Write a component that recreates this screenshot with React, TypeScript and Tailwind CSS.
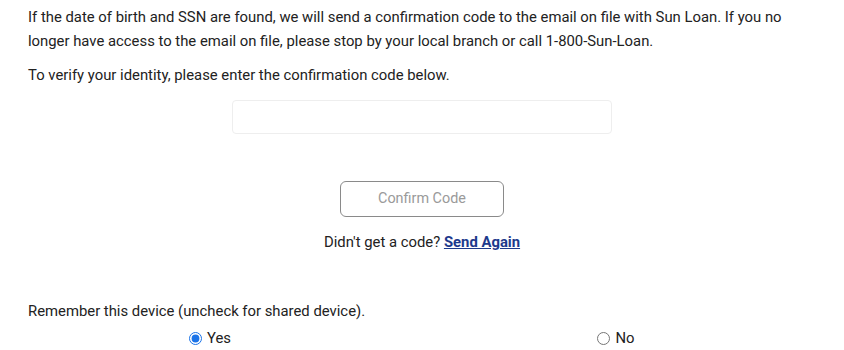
import { useState } from 'react'

export default function App() {
  const [code, setCode] = useState('')
  const [remember, setRemember] = useState(true)

  return (
    <div className="w-[844px] h-[350px] overflow-hidden bg-white text-[#222] font-['Roboto',sans-serif] text-[14.85px] leading-[24px]">
      <div className="px-[28px] pt-[5px]">
        <p>
          If the date of birth and SSN are found, we will send a confirmation code to the email on file with Sun Loan. If you no
          longer have access to the email on file, please stop by your local branch or call 1-800-Sun-Loan.
        </p>
        <p className="mt-[10px]">To verify your identity, please enter the confirmation code below.</p>
      </div>

      <div className="flex justify-center mt-[13px]">
        <input
          className="w-[380px] h-[34px] rounded-[4px] border border-[#eeeeee] px-3 outline-none"
          onChange={event => setCode(event.target.value)}
          type="text"
          value={code}
        />
      </div>

      <div className="flex justify-center mt-[47px]">
        <button
          className="w-[164px] h-[36px] rounded-[6px] border border-[#8a8a8a] text-[#9a9a9a] text-[14.4px]"
          disabled
          type="button"
        >
          Confirm Code
        </button>
      </div>

      <p className="text-center mt-[13px]">
        Didn't get a code?{' '}
        <a className="font-bold text-[#1d3a8c] underline" href="#">
          Send Again
        </a>
      </p>

      <p className="px-[28px] mt-[45px]">Remember this device (uncheck for shared device).</p>

      <div className="grid grid-cols-[420px_392px] mt-[3px]">
        <label className="flex items-center justify-center gap-[5px]">
          <input
            checked={remember}
            className="w-[13px] h-[13px] m-0 accent-[#1a73e8]"
            name="remember"
            onChange={() => setRemember(true)}
            type="radio"
          />
          <span>Yes</span>
        </label>
        <label className="flex items-center justify-center gap-[5px]">
          <input
            checked={!remember}
            className="w-[13px] h-[13px] m-0"
            name="remember"
            onChange={() => setRemember(false)}
            type="radio"
          />
          <span>No</span>
        </label>
      </div>
    </div>
  )
}
